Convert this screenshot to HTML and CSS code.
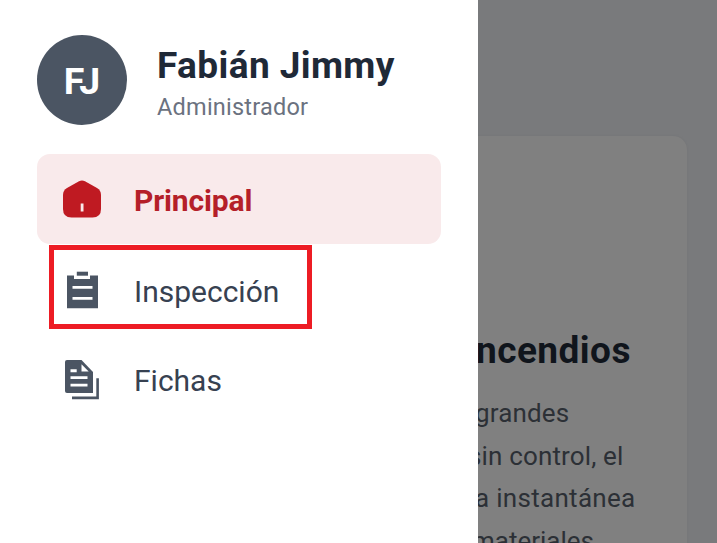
FILE: index.html
```html
<!DOCTYPE html>
<html lang="es">
<head>
<meta charset="utf-8">
<title>Menú</title>
<link rel="stylesheet" href="styles.css">
</head>
<body>
<div class="app">
  <aside class="drawer">
    <header class="profile">
      <div class="avatar"><span>FJ</span></div>
      <div class="who">
        <div class="name">Fabián Jimmy</div>
        <div class="role">Administrador</div>
      </div>
    </header>
    <nav class="menu">
      <a class="item active">
        <svg class="icon" viewBox="0 0 48 48"><path fill="#bf1a22" d="M21 6.200Q24 4.600 27 6.200L39 13Q43 15.400 43 20V34Q43 42.500 34.500 42.500H13.500Q5 42.500 5 34V20Q5 15.400 9 13Z"/><path fill="#f9eaeb" d="M22.700 28.500h2.800v8h-2.800z"/></svg>
        <span class="label">Principal</span>
      </a>
      <a class="item marked">
        <svg class="icon" viewBox="0 0 48 48"><path fill="#4b5563" d="M9 8.500H16V12H32V8.500H40V41.200H9Z"/><path fill="#4b5563" d="M18.800 4.700h11.200v4h-11.200z"/><path fill="#fff" d="M14.500 18.900h20v2.800H14.500zM14.500 30h20v2.800H14.500z"/></svg>
        <span class="label">Inspección</span>
      </a>
      <a class="item">
        <svg class="icon" viewBox="0 0 48 48"><path fill="#4b5563" d="M9 3H23.500L35 15V36H9Q7 36 7 34V5Q7 3 9 3Z"/><path fill="#4b5563" d="M38.300 21.200h2.600v21H14v-2.700h24.300z"/><path fill="#fff" d="M23.500 7.300L30.700 14.600H23.500ZM12.500 12.200h6.200v3h-6.200zM12.500 19.300h17v2.600h-17zM12.500 26.800h17v2.600h-17z"/></svg>
        <span class="label">Fichas</span>
      </a>
    </nav>
  </aside>
  <main class="page">
    <section class="card">
      <h1>ncendios</h1>
      <p class="l1">grandes</p>
      <p class="l2">sin control, el</p>
      <p class="l3">a instantánea</p>
      <p class="l4">materiales</p>
    </section>
  </main>
</div>
</body>
</html>
```
FILE: styles.css
```css
*, *::after { box-sizing: border-box; }
body { margin: 0; font-family: Roboto, sans-serif; }
.app { display: flex; width: 717px; height: 543px; overflow: hidden; }
.drawer { width: 478px; flex: none; background: #fff; padding: 35px 37px 0; }
.profile { display: flex; align-items: center; height: 90px; gap: 30px; }
.avatar { width: 90px; height: 90px; border-radius: 50%; background: #4b5563; color: #fff; display: flex; align-items: center; justify-content: center; font-size: 37.500px; font-weight: 700; letter-spacing: -1px; padding: 2px 1px 0 0; }
.who { white-space: nowrap; padding-top: 6px; }
.name { font-size: 37px; line-height: 44px; font-weight: 700; letter-spacing: 0.4px; color: #1f2937; }
.role { font-size: 23.500px; line-height: 30px; margin-top: 4px; letter-spacing: 0.23px; color: #6b7280; }
.menu { margin-top: 29px; }
.item { display: flex; align-items: center; width: 404px; height: 90px; padding-left: 21px; gap: 28px; border-radius: 13px; position: relative; }
.active { background: #f9eaeb; }
.icon { width: 48px; height: 48px; flex: none; margin-top: 3px; }
.active .icon { margin-top: 0; }
.label { font-size: 30px; line-height: 36px; color: #374151; padding-top: 3px; }
.active .label { color: #b51f29; font-weight: 700; letter-spacing: -0.15px; }
.marked .label { padding-top: 5px; }
.marked::after { content: ""; position: absolute; left: 12px; top: 1px; width: 263px; height: 84px; border: 5px solid #ed1c24; }
.page { flex: 1; overflow: hidden; background: #797a7c; padding-top: 136px; }
.card { width: 209px; height: 420px; padding-top: 193px; background: #808080; border-top-right-radius: 14px; overflow: hidden; white-space: nowrap; box-shadow: 0 0 2px #727375; }
h1 { margin: 0 0 19px -2px; font-size: 37px; line-height: 44px; font-weight: 700; letter-spacing: 0.45px; color: #10151c; }
p { margin: 0; font-size: 26px; line-height: 42.500px; color: #2c3036; }
.l1 { margin-left: -3px; letter-spacing: 0.15px; }
.l2 { margin-left: -10px; letter-spacing: 0.15px; }
.l3 { margin-left: -3px; letter-spacing: 0.3px; }
.l4 { margin-left: -6px; }
```
